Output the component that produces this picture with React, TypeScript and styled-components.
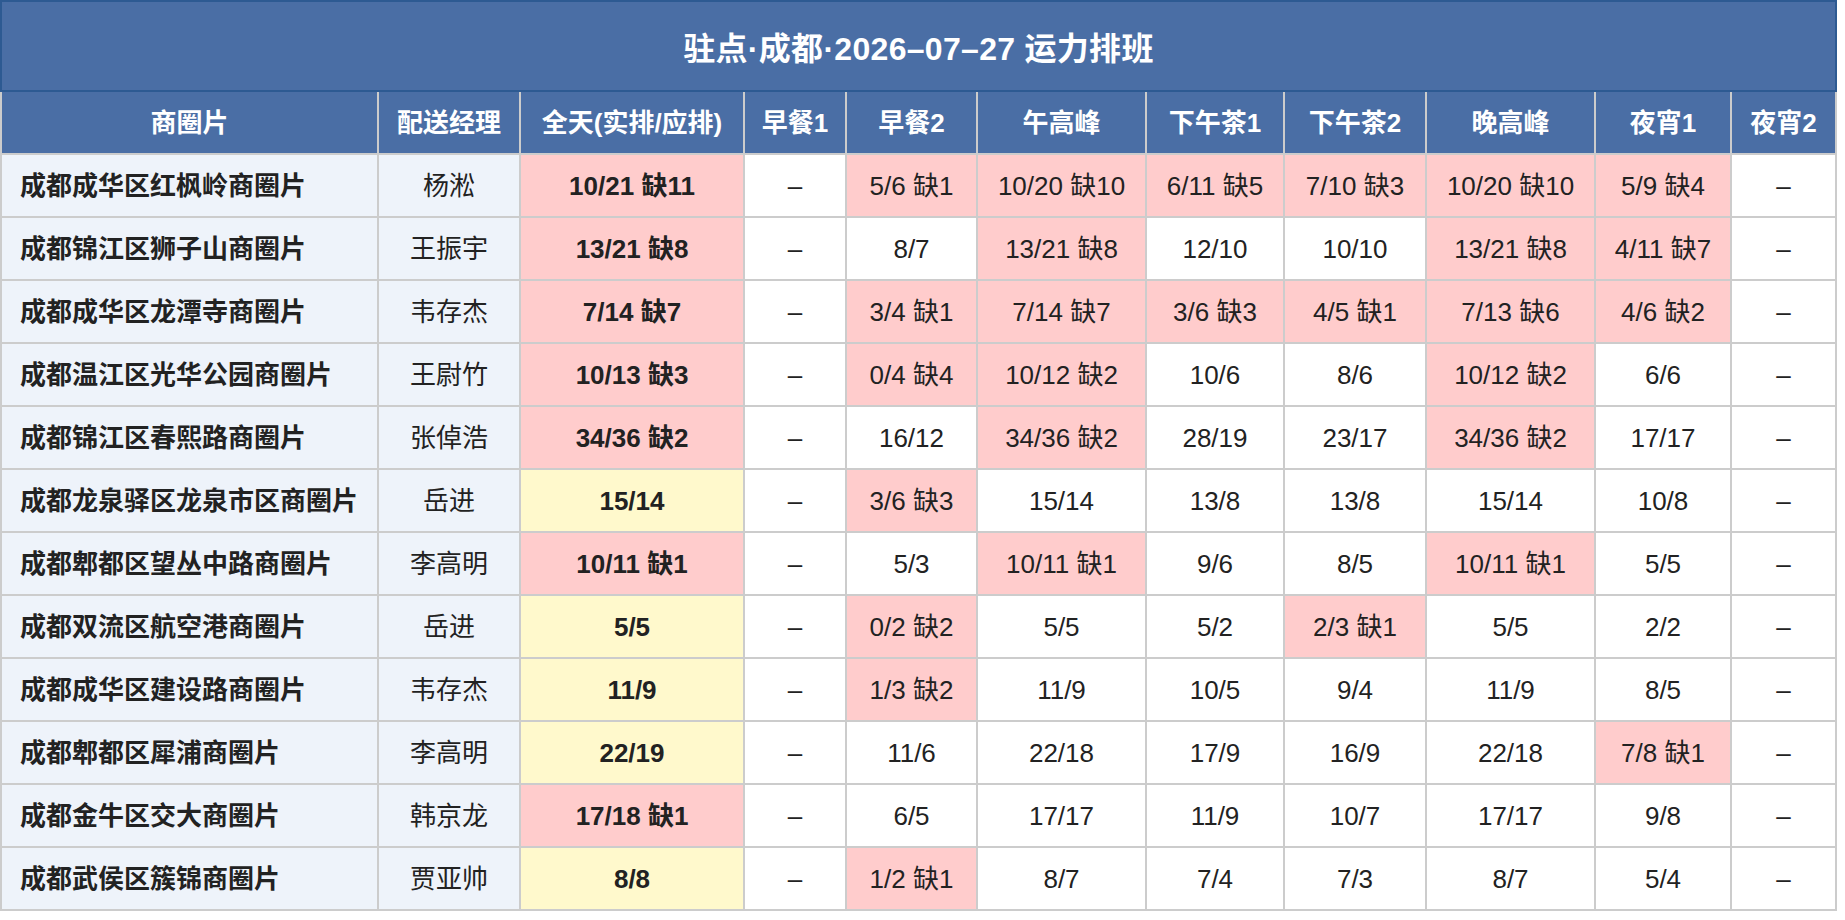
import * as React from 'react';
import styled, { createGlobalStyle } from 'styled-components';

const GlobalStyle = createGlobalStyle`
  html, body {
    margin: 0;
    padding: 0;
    background: #ffffff;
  }
  body {
    font-family: "Liberation Sans", "Noto Sans CJK SC", sans-serif;
    color: #222222;
  }
`;

type Tone = 'short' | 'full' | 'plain';

const COLUMNS = [
    { title: '商圈片', width: 379 },
    { title: '配送经理', width: 142 },
    { title: '全天(实排/应排)', width: 224 },
    { title: '早餐1', width: 102 },
    { title: '早餐2', width: 131 },
    { title: '午高峰', width: 169 },
    { title: '下午茶1', width: 138 },
    { title: '下午茶2', width: 142 },
    { title: '晚高峰', width: 169 },
    { title: '夜宵1', width: 136 },
    { title: '夜宵2', width: 105 },
];

// [商圈片, 经理, 全天, 早餐1, 早餐2, 午高峰, 下午茶1, 下午茶2, 晚高峰, 夜宵1, 夜宵2]
const ROWS: string[][] = [
    ['成都成华区红枫岭商圈片', '杨淞', '10/21', '', '5/6', '10/20', '6/11', '7/10', '10/20', '5/9', ''],
    ['成都锦江区狮子山商圈片', '王振宇', '13/21', '', '8/7', '13/21', '12/10', '10/10', '13/21', '4/11', ''],
    ['成都成华区龙潭寺商圈片', '韦存杰', '7/14', '', '3/4', '7/14', '3/6', '4/5', '7/13', '4/6', ''],
    ['成都温江区光华公园商圈片', '王尉竹', '10/13', '', '0/4', '10/12', '10/6', '8/6', '10/12', '6/6', ''],
    ['成都锦江区春熙路商圈片', '张倬浩', '34/36', '', '16/12', '34/36', '28/19', '23/17', '34/36', '17/17', ''],
    ['成都龙泉驿区龙泉市区商圈片', '岳进', '15/14', '', '3/6', '15/14', '13/8', '13/8', '15/14', '10/8', ''],
    ['成都郫都区望丛中路商圈片', '李高明', '10/11', '', '5/3', '10/11', '9/6', '8/5', '10/11', '5/5', ''],
    ['成都双流区航空港商圈片', '岳进', '5/5', '', '0/2', '5/5', '5/2', '2/3', '5/5', '2/2', ''],
    ['成都成华区建设路商圈片', '韦存杰', '11/9', '', '1/3', '11/9', '10/5', '9/4', '11/9', '8/5', ''],
    ['成都郫都区犀浦商圈片', '李高明', '22/19', '', '11/6', '22/18', '17/9', '16/9', '22/18', '7/8', ''],
    ['成都金牛区交大商圈片', '韩京龙', '17/18', '', '6/5', '17/17', '11/9', '10/7', '17/17', '9/8', ''],
    ['成都武侯区簇锦商圈片', '贾亚帅', '8/8', '', '1/2', '8/7', '7/4', '7/3', '8/7', '5/4', ''],
];

const toneBg: Record<Tone, string> = {
    short: '#ffcccc',
    full: '#fff9cc',
    plain: '#ffffff',
};

const Page = styled.div`
    width: 1837px;
`;

const TitleBar = styled.div`
    box-sizing: border-box;
    height: 92px;
    display: flex;
    align-items: center;
    justify-content: center;
    background: #4a6ea5;
    border: 2px solid #2d5a92;
    color: #ffffff;
    font-size: 32px;
    font-weight: 700;
    letter-spacing: 0.3px;
`;

const Sheet = styled.table`
    width: 1837px;
    table-layout: fixed;
    border-collapse: separate;
    border-spacing: 0;
`;

const Cell = styled.td`
    box-sizing: border-box;
    padding: 13px 6px 12px;
    line-height: 36px;
    font-size: 26px;
    text-align: center;
    white-space: nowrap;
    border-right: 2px solid #cccccc;
    border-bottom: 2px solid #cccccc;
    &:first-child {
        border-left: 2px solid #cccccc;
    }
`;

const HeadCell = styled(Cell).attrs({ as: 'th' })`
    background: #4a6ea5;
    color: #ffffff;
    font-weight: 700;
`;

const AreaCell = styled(Cell)`
    text-align: left;
    padding-left: 18px;
    background: #eef3fa;
    font-weight: 700;
`;

const ManagerCell = styled(Cell)`
    background: #eef3fa;
`;

const SlotCell = styled(Cell)<{ $tone: Tone; $strong?: boolean }>`
    background: ${(p) => toneBg[p.$tone]};
    font-weight: ${(p) => (p.$strong ? 700 : 400)};
`;

const describe = (value: string, isTotal: boolean): { text: string; tone: Tone } => {
    if (!value) return { text: '–', tone: 'plain' };
    const [actual, planned] = value.split('/').map(Number);
    if (actual < planned) return { text: `${value} 缺${planned - actual}`, tone: 'short' };
    return { text: value, tone: isTotal ? 'full' : 'plain' };
};

export default function App() {
    return (
        <Page>
            <GlobalStyle />
            <TitleBar>驻点·成都·2026–07–27 运力排班</TitleBar>
            <Sheet>
                <colgroup>
                    {COLUMNS.map((c) => (
                        <col key={c.title} style={{ width: c.width }} />
                    ))}
                </colgroup>
                <thead>
                    <tr>
                        {COLUMNS.map((c) => (
                            <HeadCell key={c.title}>{c.title}</HeadCell>
                        ))}
                    </tr>
                </thead>
                <tbody>
                    {ROWS.map((row) => (
                        <tr key={row[0]}>
                            <AreaCell>{row[0]}</AreaCell>
                            <ManagerCell>{row[1]}</ManagerCell>
                            {row.slice(2).map((v, i) => {
                                const { text, tone } = describe(v, i === 0);
                                return (
                                    <SlotCell key={i} $tone={tone} $strong={i === 0}>
                                        {text}
                                    </SlotCell>
                                );
                            })}
                        </tr>
                    ))}
                </tbody>
            </Sheet>
        </Page>
    );
}
